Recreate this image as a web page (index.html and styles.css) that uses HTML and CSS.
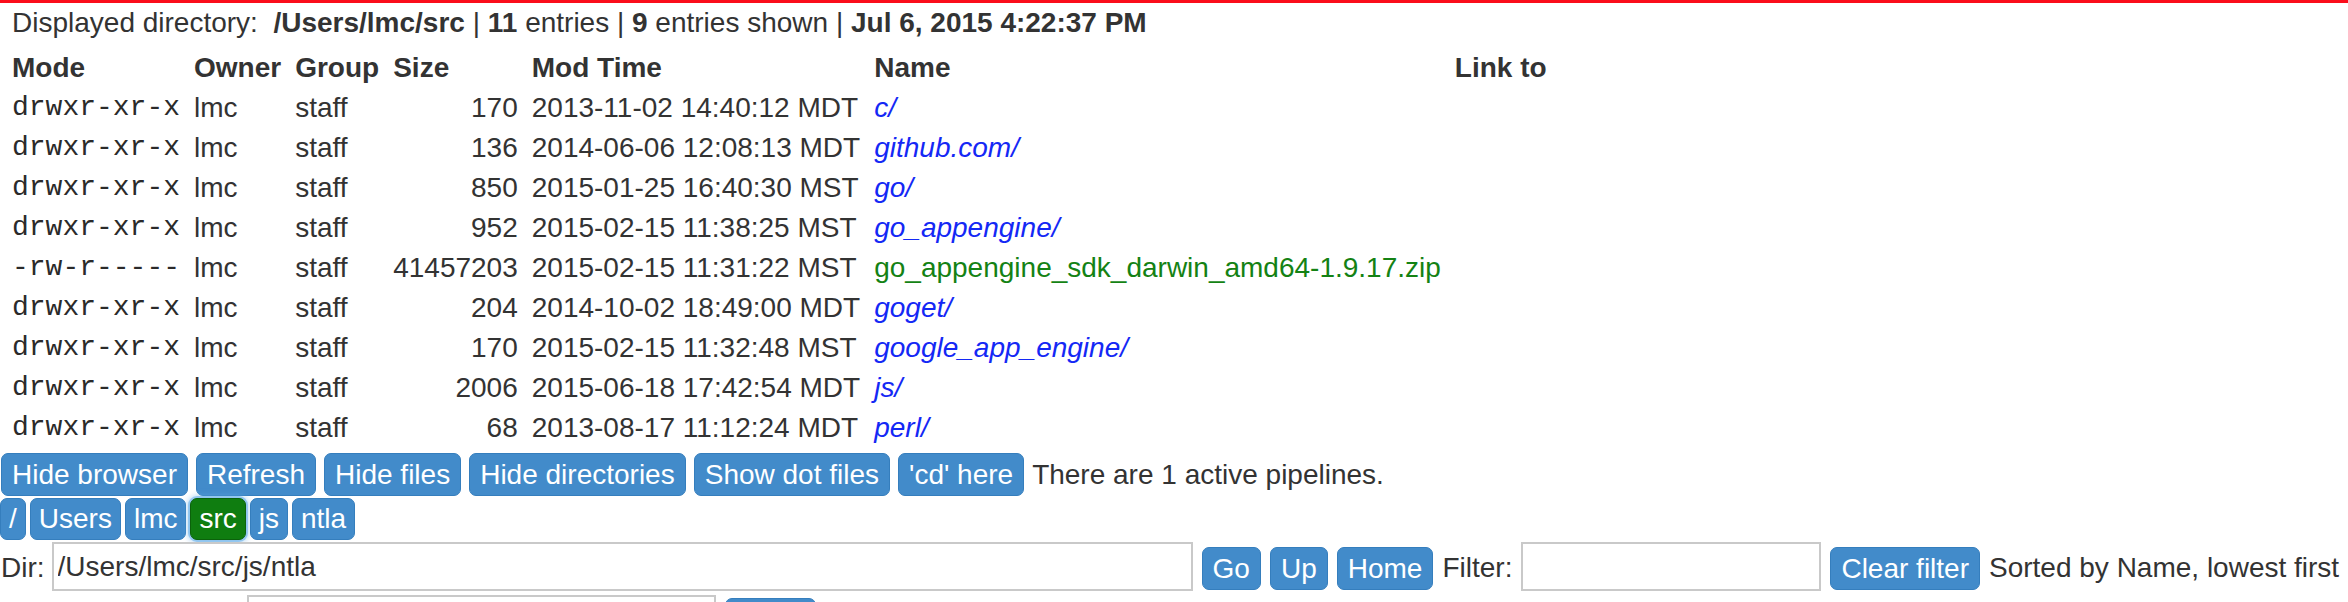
FILE: index.html
```html
<!DOCTYPE html>
<html>
<head>
<meta charset="utf-8">
<title>Directory browser</title>
<link rel="stylesheet" href="styles.css">
</head>
<body>
<div class="page">
  <div class="status">Displayed directory:&nbsp; <b>/Users/lmc/src</b> | <b>11</b> entries | <b>9</b> entries shown | <b>Jul 6, 2015 4:22:37 PM</b></div>

  <table class="listing">
    <thead>
      <tr><th>Mode</th><th>Owner</th><th>Group</th><th>Size</th><th>Mod Time</th><th>Name</th><th>Link to</th></tr>
    </thead>
    <tbody>
      <tr><td class="mode">drwxr-xr-x</td><td>lmc</td><td>staff</td><td class="size">170</td><td>2013-11-02 14:40:12 MDT</td><td><a class="dir">c/</a></td><td></td></tr>
      <tr><td class="mode">drwxr-xr-x</td><td>lmc</td><td>staff</td><td class="size">136</td><td>2014-06-06 12:08:13 MDT</td><td><a class="dir">github.com/</a></td><td></td></tr>
      <tr><td class="mode">drwxr-xr-x</td><td>lmc</td><td>staff</td><td class="size">850</td><td>2015-01-25 16:40:30 MST</td><td><a class="dir">go/</a></td><td></td></tr>
      <tr><td class="mode">drwxr-xr-x</td><td>lmc</td><td>staff</td><td class="size">952</td><td>2015-02-15 11:38:25 MST</td><td><a class="dir">go_appengine/</a></td><td></td></tr>
      <tr><td class="mode">-rw-r-----</td><td>lmc</td><td>staff</td><td class="size">41457203</td><td>2015-02-15 11:31:22 MST</td><td><a class="file">go_appengine_sdk_darwin_amd64-1.9.17.zip</a></td><td></td></tr>
      <tr><td class="mode">drwxr-xr-x</td><td>lmc</td><td>staff</td><td class="size">204</td><td>2014-10-02 18:49:00 MDT</td><td><a class="dir">goget/</a></td><td></td></tr>
      <tr><td class="mode">drwxr-xr-x</td><td>lmc</td><td>staff</td><td class="size">170</td><td>2015-02-15 11:32:48 MST</td><td><a class="dir">google_app_engine/</a></td><td></td></tr>
      <tr><td class="mode">drwxr-xr-x</td><td>lmc</td><td>staff</td><td class="size">2006</td><td>2015-06-18 17:42:54 MDT</td><td><a class="dir">js/</a></td><td></td></tr>
      <tr><td class="mode">drwxr-xr-x</td><td>lmc</td><td>staff</td><td class="size">68</td><td>2013-08-17 11:12:24 MDT</td><td><a class="dir">perl/</a></td><td></td></tr>
    </tbody>
  </table>

  <div class="toolbar">
    <button class="btn">Hide browser</button>
    <button class="btn">Refresh</button>
    <button class="btn">Hide files</button>
    <button class="btn">Hide directories</button>
    <button class="btn">Show dot files</button>
    <button class="btn">'cd' here</button>
    <span class="note">There are 1 active pipelines.</span>
  </div>

  <div class="crumbs">
    <button class="crumb">/</button>
    <button class="crumb">Users</button>
    <button class="crumb">lmc</button>
    <button class="crumb current">src</button>
    <button class="crumb">js</button>
    <button class="crumb">ntla</button>
  </div>

  <div class="dirrow">
    <span class="label">Dir:</span>
    <input class="dir-input" type="text" value="/Users/lmc/src/js/ntla">
    <button class="btn">Go</button>
    <button class="btn">Up</button>
    <button class="btn">Home</button>
    <span class="label">Filter:</span>
    <input class="filter-input" type="text" value="">
    <button class="btn">Clear filter</button>
    <span class="label">Sorted by Name, lowest first</span>
  </div>

  <div class="cmdrow">
    <input class="cmd-input" type="text" value="">
    <button class="btn cmd-btn"></button>
  </div>
</div>
</body>
</html>
```

FILE: styles.css
```css
html, body {
  margin: 0;
  padding: 0;
  overflow: hidden;
  background: #ffffff;
}

body {
  border-top: 3px solid #fb0d1b;
  font-family: "Liberation Sans", Arial, Helvetica, sans-serif;
  font-size: 28px;
  line-height: 40px;
  color: #333333;
}

.page {
  display: flex;
  flex-direction: column;
  align-items: flex-start;
}

.status {
  padding-left: 12px;
  margin-bottom: 5px;
  white-space: nowrap;
}

.status b {
  font-weight: bold;
}

.listing {
  margin-left: 12px;
  border-collapse: collapse;
  border-spacing: 0;
}

.listing th,
.listing td {
  padding: 0 14px 0 0;
  height: 40px;
  line-height: 40px;
  white-space: nowrap;
  text-align: left;
  vertical-align: middle;
}

.listing th {
  font-weight: bold;
}

.listing td.size {
  text-align: right;
}

.listing td.mode {
  font-family: "Liberation Mono", "Courier New", monospace;
  font-size: 28px;
  color: #2a2a2a;
}

.dir {
  color: #1428f5;
  font-style: italic;
}

.file {
  color: #148214;
}

.toolbar {
  margin-top: 5px;
  display: flex;
  align-items: center;
  gap: 8px;
  padding-left: 1px;
  white-space: nowrap;
}

.btn {
  font-family: "Liberation Sans", Arial, Helvetica, sans-serif;
  font-size: 28px;
  line-height: 37px;
  padding: 2px 10px;
  margin: 0;
  border: 1px solid #357ebd;
  border-radius: 7px;
  background: #428bca;
  color: #ffffff;
  white-space: nowrap;
}

.crumbs {
  margin-top: 2px;
  display: flex;
  align-items: center;
  gap: 4px;
}

.crumb {
  font-family: "Liberation Sans", Arial, Helvetica, sans-serif;
  font-size: 28px;
  line-height: 36px;
  padding: 2px 8px;
  margin: 0;
  border: 1px solid #357ebd;
  border-radius: 7px;
  background: #428bca;
  color: #ffffff;
}

.crumb.current {
  background: #0f7d10;
  border-color: #0b620b;
  box-shadow: 0 0 0 2px rgba(102, 175, 233, 0.55), 0 0 6px 2px rgba(102, 175, 233, 0.6);
}

.dirrow {
  margin-top: 2px;
  display: flex;
  align-items: flex-end;
  gap: 9px;
  white-space: nowrap;
}

.dirrow .label {
  line-height: 47px;
}

.dirrow .btn {
  margin-bottom: 1px;
}

.dirrow .label:first-child {
  margin-left: 1px;
  margin-right: -2px;
}

input {
  font-family: "Liberation Sans", Arial, Helvetica, sans-serif;
  font-size: 28px;
  color: #333333;
  box-sizing: border-box;
  height: 49px;
  padding: 0 4px;
  margin: 0;
  border: 2px solid #c9c9c9;
  border-radius: 0;
  background: #ffffff;
}

.dir-input {
  width: 1141px;
}

.filter-input {
  width: 300px;
}

.cmdrow {
  margin-top: 4px;
  padding-left: 247px;
  display: flex;
  align-items: flex-start;
  gap: 9px;
}

.cmd-input {
  width: 469px;
}

.cmd-btn {
  width: 91px;
  height: 43px;
  margin-top: 3px;
}
```
